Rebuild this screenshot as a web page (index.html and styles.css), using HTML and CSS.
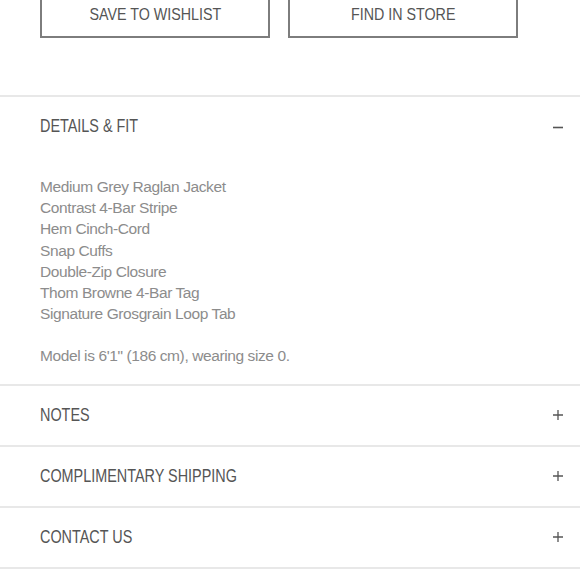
FILE: index.html
```html
<!DOCTYPE html>
<html lang="en">
<head>
    <meta charset="UTF-8">
    <meta name="viewport" content="width=device-width, initial-scale=1.0">
    <title>Product Details</title>
    <link rel="stylesheet" href="styles.css">
</head>
<body>
    <div class="actions">
        <button class="btn"><span class="btn-label">SAVE TO WISHLIST</span></button>
        <button class="btn"><span class="btn-label">FIND IN STORE</span></button>
    </div>

    <div class="accordion">
        <div class="panel open">
            <div class="panel-head">
                <span class="panel-title">DETAILS &amp; FIT</span>
                <svg class="toggle" width="12" height="12" viewBox="0 0 12 12"><path d="M1 6.5h10" stroke="#555" stroke-width="1.6"/></svg>
            </div>
            <div class="panel-body">
                <p>
                    Medium Grey Raglan Jacket<br>
                    Contrast 4-Bar Stripe<br>
                    Hem Cinch-Cord<br>
                    Snap Cuffs<br>
                    Double-Zip Closure<br>
                    Thom Browne 4-Bar Tag<br>
                    Signature Grosgrain Loop Tab
                </p>
                <p>Model is 6'1" (186 cm), wearing size 0.</p>
            </div>
        </div>

        <div class="panel">
            <div class="panel-head">
                <span class="panel-title">NOTES</span>
                <svg class="toggle" width="12" height="12" viewBox="0 0 12 12"><path d="M1 6h10M6 1v10" stroke="#555" stroke-width="1.3"/></svg>
            </div>
        </div>

        <div class="panel">
            <div class="panel-head">
                <span class="panel-title">COMPLIMENTARY SHIPPING</span>
                <svg class="toggle" width="12" height="12" viewBox="0 0 12 12"><path d="M1 6h10M6 1v10" stroke="#555" stroke-width="1.3"/></svg>
            </div>
        </div>

        <div class="panel">
            <div class="panel-head">
                <span class="panel-title">CONTACT US</span>
                <svg class="toggle" width="12" height="12" viewBox="0 0 12 12"><path d="M1 6h10M6 1v10" stroke="#555" stroke-width="1.3"/></svg>
            </div>
        </div>
    </div>
</body>
</html>
```

FILE: styles.css
```css
body {
    margin: 0;
    font-family: "Liberation Sans", Arial, sans-serif;
    color: #555;
    background: #fff;
}

.actions {
    display: grid;
    grid-template-columns: 230px 230px;
    gap: 18px;
    padding: 0 40px;
    margin-top: -10px;
    margin-bottom: 57px;
}

.btn {
    height: 48px;
    background: #fff;
    border: 2px solid #7d7d7d;
    padding: 2px 0 0;
    font-family: "Liberation Sans", Arial, sans-serif;
    font-size: 17px;
    color: #555;
}

/* caps in the original are set in a narrow face */
.btn-label {
    display: inline-block;
    transform: scaleX(0.84);
    white-space: nowrap;
}

.accordion {
    border-bottom: 2px solid #e8e8e8;
}

.panel {
    border-top: 2px solid #e8e8e8;
}

.panel-head {
    display: flex;
    align-items: center;
    justify-content: space-between;
    height: 59px;
    padding: 0 16px 0 40px;
}

.panel-title {
    display: inline-block;
    font-size: 18px;
    color: #555;
    white-space: nowrap;
    transform: scaleX(0.8);
    transform-origin: left center;
}

.panel-body {
    padding: 20px 40px 17px;
    font-size: 15.5px;
    letter-spacing: -0.4px;
    line-height: 21.2px;
    color: #8c8c8c;
}

.panel-body p {
    margin: 0 0 21px;
}

.panel-body p:last-child {
    margin-bottom: 0;
}
```
